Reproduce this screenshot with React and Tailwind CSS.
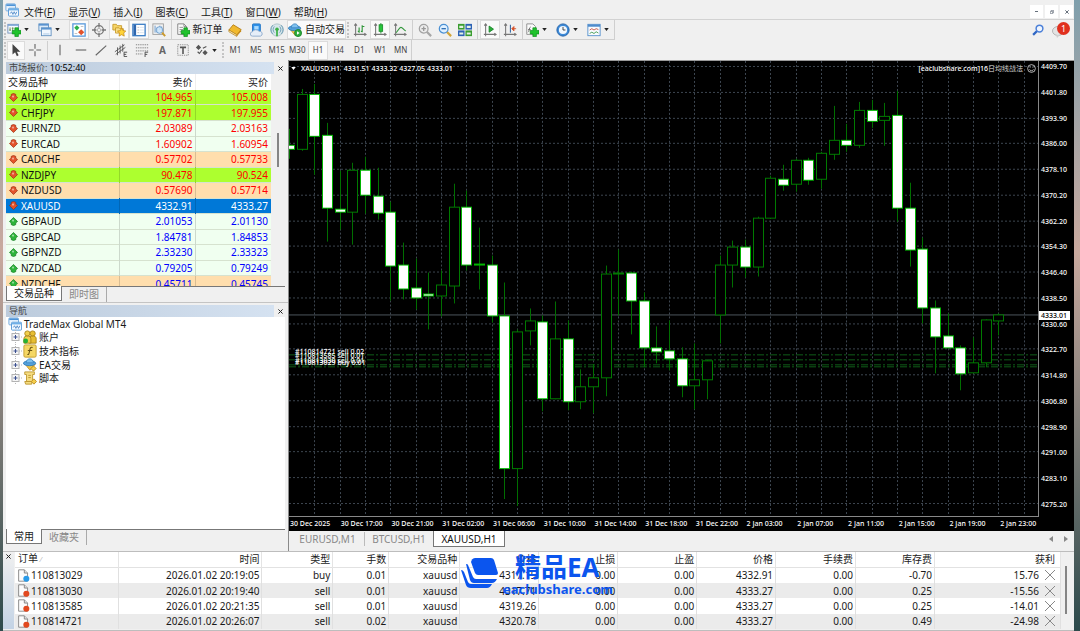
import React from 'react';
import clsx from 'clsx';

const MENUS = [
  ['文件', 'F'],
  ['显示', 'V'],
  ['插入', 'I'],
  ['图表', 'C'],
  ['工具', 'T'],
  ['窗口', 'W'],
  ['帮助', 'H'],
];

const TIMEFRAMES = ['M1', 'M5', 'M15', 'M30', 'H1', 'H4', 'D1', 'W1', 'MN'];

const QUOTES = [
  { symbol: 'AUDJPY', bid: '104.965', ask: '105.008', dir: 'down', row: 'bg-[#adff2f]' },
  { symbol: 'CHFJPY', bid: '197.871', ask: '197.955', dir: 'down', row: 'bg-[#adff2f]' },
  { symbol: 'EURNZD', bid: '2.03089', ask: '2.03163', dir: 'down', row: 'bg-[#f0fff0]' },
  { symbol: 'EURCAD', bid: '1.60902', ask: '1.60954', dir: 'down', row: 'bg-[#f0fff0]' },
  { symbol: 'CADCHF', bid: '0.57702', ask: '0.57733', dir: 'down', row: 'bg-[#ffdead]' },
  { symbol: 'NZDJPY', bid: '90.478', ask: '90.524', dir: 'down', row: 'bg-[#adff2f]' },
  { symbol: 'NZDUSD', bid: '0.57690', ask: '0.57714', dir: 'down', row: 'bg-[#ffdead]' },
  { symbol: 'XAUUSD', bid: '4332.91', ask: '4333.27', dir: 'down', row: 'bg-[#0078d7]', selected: true },
  { symbol: 'GBPAUD', bid: '2.01053', ask: '2.01130', dir: 'up', row: 'bg-[#f0fff0]' },
  { symbol: 'GBPCAD', bid: '1.84781', ask: '1.84853', dir: 'up', row: 'bg-[#f0fff0]' },
  { symbol: 'GBPNZD', bid: '2.33230', ask: '2.33323', dir: 'up', row: 'bg-[#f0fff0]' },
  { symbol: 'NZDCAD', bid: '0.79205', ask: '0.79249', dir: 'up', row: 'bg-[#f0fff0]' },
  { symbol: 'NZDCHF', bid: '0.45711', ask: '0.45745', dir: 'up', row: 'bg-[#ffdead]' },
];

const ORDERS = [
  ['110813029', '2026.01.02 20:19:05', 'buy', '0.01', 'xauusd', '4317.15', '0.00', '0.00', '4332.91', '0.00', '-0.70', '15.76'],
  ['110813030', '2026.01.02 20:19:40', 'sell', '0.01', 'xauusd', '4317.71', '0.00', '0.00', '4333.27', '0.00', '0.25', '-15.56'],
  ['110813585', '2026.01.02 20:21:35', 'sell', '0.01', 'xauusd', '4319.26', '0.00', '0.00', '4333.27', '0.00', '0.25', '-14.01'],
  ['110814721', '2026.01.02 20:26:07', 'sell', '0.02', 'xauusd', '4320.78', '0.00', '0.00', '4333.27', '0.00', '0.49', '-24.98'],
];

const ORDER_COLUMNS = [
  { label: '时间', width: 'w-[143px]' },
  { label: '类型', width: 'w-[71px]' },
  { label: '手数', width: 'w-[56px]' },
  { label: '交易品种', width: 'w-[71px]' },
  { label: '价格', width: 'w-[79px]' },
  { label: '止损', width: 'w-[79px]' },
  { label: '止盈', width: 'w-[79px]' },
  { label: '价格', width: 'w-[79px]' },
  { label: '手续费', width: 'w-[80px]' },
  { label: '库存费', width: 'w-[79px]' },
  { label: '获利', width: 'w-[126px]' },
];

const PRICES = [
  '4409.70', '4401.80', '4393.90', '4386.00', '4378.10', '4370.20', '4362.20', '4354.30', '4346.40',
  '4338.50', '4330.60', '4322.70', '4314.80', '4306.80', '4298.90', '4291.00', '4283.10', '4275.20',
];

const TIMES = [
  '30 Dec 2025', '30 Dec 17:00', '30 Dec 21:00', '31 Dec 02:00', '31 Dec 06:00', '31 Dec 10:00', '31 Dec 14:00',
  '31 Dec 18:00', '31 Dec 22:00', '2 Jan 03:00', '2 Jan 07:00', '2 Jan 11:00', '2 Jan 15:00', '2 Jan 19:00', '2 Jan 23:00',
];

// [high, low, body top, body bottom, 1 = bear (filled) / 0 = bull (hollow)]
const CANDLES = [
  [68, 98, 84, 88, 1], [28, 90, 33, 88, 0], [23, 114, 33, 75, 1], [62, 181, 74, 147, 1],
  [110, 169, 148, 151, 1], [102, 184, 109, 151, 0], [96, 153, 109, 134, 1], [107, 159, 135, 152, 1],
  [141, 240, 151, 205, 1], [182, 239, 204, 228, 1], [198, 249, 227, 237, 1], [212, 269, 233, 235, 1],
  [210, 256, 224, 235, 0], [123, 243, 146, 225, 0], [130, 210, 146, 204, 1], [167, 229, 203, 204, 1],
  [195, 262, 204, 255, 1], [222, 439, 255, 408, 1], [269, 446, 271, 408, 0], [248, 285, 260, 270, 0],
  [255, 351, 261, 338, 1], [241, 339, 278, 338, 0], [260, 350, 278, 341, 1], [309, 349, 326, 341, 0],
  [304, 353, 317, 326, 0], [205, 336, 213, 317, 0], [189, 255, 212, 213, 0], [211, 274, 212, 240, 1],
  [232, 307, 240, 287, 1], [266, 303, 287, 291, 1], [260, 310, 290, 298, 1], [287, 337, 298, 325, 1],
  [283, 349, 319, 325, 0], [300, 339, 300, 319, 0], [195, 283, 204, 254, 0], [180, 227, 186, 204, 0],
  [179, 217, 186, 206, 1], [156, 216, 157, 206, 0], [115, 158, 117, 157, 0], [104, 130, 118, 124, 1],
  [98, 131, 99, 123, 0], [97, 124, 99, 119, 1], [91, 128, 92, 118, 0], [45, 99, 79, 93, 0],
  [63, 91, 79, 84, 1], [41, 87, 49, 84, 0], [39, 67, 49, 60, 1], [42, 85, 55, 59, 0],
  [30, 161, 54, 147, 1], [122, 206, 147, 189, 1], [177, 263, 188, 247, 1], [240, 313, 247, 276, 1],
  [253, 287, 275, 287, 1], [285, 330, 287, 313, 1], [277, 313, 302, 312, 0], [259, 307, 259, 302, 0],
  [253, 275, 254, 260, 0],
];

const POSITIONS = [
  { y: 'top-[286px]', text: '#110814721 sell 0.02' },
  { y: 'top-[290px]', text: '#110813585 sell 0.01' },
  { y: 'top-[295px]', text: '#110813030 sell 0.01' },
  { y: 'top-[297px]', text: '#110813029 buy 0.01' },
];

/* ---------- icons ---------- */

function Icon({ children, className = 'h-[14px] w-[14px]' }) {
  return (
    <svg viewBox="0 0 16 16" fill="none" aria-hidden="true" className={clsx('shrink-0', className)}>
      {children}
    </svg>
  );
}

const Plus = () => (
  <path d="M9 5.500h4v3h3v4h-3v3H9v-3H6v-4h3z" fill="#1fc32c" stroke="#0c8c1a" strokeWidth=".8" />
);

const AppIcon = () => (
  <Icon>
    <rect x="1" y="1" width="11" height="8" rx="1" fill="#eaf4fd" stroke="#6aa5dc" />
    <path d="M1.500 2.500h10" stroke="#4d93d6" strokeWidth="2" />
    <rect x="4" y="6" width="11.500" height="9" rx="1" fill="#f4faff" stroke="#4d93d6" />
    <path d="M4.500 7.500h10.500" stroke="#6fb0e8" strokeWidth="2" />
    <path d="m6 12 1.500-2 1.500 3 1.500-3 1.500 3 1.500-3" stroke="#4b86c6" />
  </Icon>
);

const NewChart = () => (
  <Icon>
    <rect x="1" y="1.500" width="12" height="10" fill="#f4f9ff" stroke="#6a8db8" />
    <path d="M1 2.500h12" stroke="#7aa5d8" strokeWidth="1.500" />
    <path d="M3.500 5v4M2.500 8h2M6.500 5v4M5.500 6h2" stroke="#698c4e" />
    <Plus />
  </Icon>
);

const Profiles = () => (
  <Icon>
    <rect x="1" y="1" width="11" height="8" fill="#dcebf9" stroke="#5f8fbf" />
    <path d="M1 2h11" stroke="#5a93cf" strokeWidth="2" />
    <rect x="4" y="5.500" width="11" height="9" fill="#f0f7fe" stroke="#5f8fbf" />
    <path d="M4 6.500h11" stroke="#5a93cf" strokeWidth="2" />
    <path d="M6 12.500h7" stroke="#a8c5e2" />
  </Icon>
);

const MarketIcon = () => (
  <Icon>
    <rect x="1" y="1" width="14" height="14" fill="#fff" stroke="#5b9bdc" strokeWidth="1.500" />
    <path d="m5.500 2.500 3 3-3 3-3-3z" fill="#2bb04a" />
    <path d="m10.500 7 3.500 3.500-3.500 3.500L7 10.500z" fill="#e2522b" />
    <path d="M10 4h3M3 12h3" stroke="#bbb" />
  </Icon>
);

const DataIcon = () => (
  <Icon>
    <circle cx="8" cy="8" r="5" stroke="#777" strokeWidth="1.500" />
    <circle cx="8" cy="8" r="2" stroke="#aaa" />
    <path d="M8 0v5M8 11v5M0 8h5M11 8h5" stroke="#777" strokeWidth="1.500" />
  </Icon>
);

const FolderStar = () => (
  <Icon>
    <path d="M1 1.500h4l1 1.500h5v5H1z" fill="#f6d568" stroke="#c79a2d" />
    <path d="M4 5.500h4l1 1h4v5H4z" fill="#f9e089" stroke="#c79a2d" />
    <path d="m11 5.500 1.500 3.200 3.300.4-2.400 2.400.6 3.500-3-1.700-3 1.700.6-3.500L6.200 9.100l3.300-.4z" fill="#ffd43a" stroke="#c2861a" strokeWidth=".8" />
  </Icon>
);

const TerminalIcon = () => (
  <Icon>
    <rect x="1" y="1.500" width="14" height="13" fill="#fff" stroke="#3e7fc6" strokeWidth="1.500" />
    <path d="M3.200 2v12" stroke="#2d66ae" strokeWidth="3" />
    <path d="M6.500 5h1M6.500 8h1M6.500 11h1" stroke="#888" />
    <path d="M8.500 5h5M8.500 8h5M8.500 11h5" stroke="#d7e2ef" />
  </Icon>
);

const TesterIcon = () => (
  <Icon>
    <rect x="1" y="1" width="12" height="12" fill="#f3f3f3" stroke="#9a9a9a" />
    <path d="M3.500 3v8M6 5v6M9 3v5M11 4v5" stroke="#5b92ca" />
    <circle cx="8.500" cy="8" r="3.800" fill="#cbe5fa" fillOpacity=".85" stroke="#6b9ccc" />
    <path d="m11.500 11 3.500 4" stroke="#cc9a2c" strokeWidth="2.200" />
  </Icon>
);

const NewOrderIcon = () => (
  <Icon>
    <path d="M2 1h7l3 3v9H2z" fill="#fafafa" stroke="#7d7d7d" />
    <path d="M9 1v3h3M4 5h4M4 7.500h4M4 10h3" stroke="#8b8b8b" />
    <Plus />
  </Icon>
);

const GoldBook = () => (
  <Icon>
    <path d="M6 2l9 5.500-5 6L1 8z" fill="#f0b92e" stroke="#b27c14" />
    <path d="m1 8 9 5.500v1.800L1 10z" fill="#fff0bd" stroke="#b27c14" strokeWidth=".8" />
    <path d="m10 13.500 5-6v2l-5 5.800z" fill="#c88c19" />
  </Icon>
);

const CloudUser = () => (
  <Icon>
    <rect x="4" y="1" width="9" height="9" rx="1" fill="#2f92ea" stroke="#1f73c4" />
    <path d="M6 3.500h5v4H6z" fill="#a9dbff" />
    <path d="M4 15a2.500 2.500 0 0 1 0-5 4 3 0 0 1 7.500-.5A2.800 2.800 0 0 1 13 15z" fill="#e6eef8" stroke="#8ba8ca" />
  </Icon>
);

const SignalIcon = () => (
  <Icon>
    <circle cx="8" cy="8" r="7" fill="#d7e6ea" stroke="#a8c0c6" />
    <path d="M5 4a5 5 0 0 0 0 7M11 4a5 5 0 0 1 0 7M3 2.500a8 8 0 0 0 0 10M13 2.500a8 8 0 0 1 0 10" stroke="#6598b4" />
    <circle cx="8" cy="7" r="2" fill="#3eb047" />
    <path d="M8 8v7" stroke="#3eb047" strokeWidth="2" />
  </Icon>
);

const HatIcon = ({ play }) => (
  <Icon>
    <path d="M2 6.500 8 14l6-7z" fill="#f1c546" stroke="#c4912a" />
    <ellipse cx="7.500" cy="6" rx="7" ry="2.800" fill="#57a3dd" stroke="#2f7ab8" />
    <path d="M3.500 5.500C4 2 6 1 8 1s3.500 1.500 4 4.500z" fill="#7fc1ef" stroke="#3a86c2" />
    {play ? (
      <>
        <circle cx="11.500" cy="11.500" r="4" fill="#2fae3e" stroke="#178527" />
        <path d="m10.300 9.500 3 2-3 2z" fill="#fff" />
      </>
    ) : (
      <path d="m12 9 3 3-3 3-3-3z" fill="#f4cd4a" stroke="#b98a1e" />
    )}
  </Icon>
);

const Axis = () => (
  <path d="M3 1v14M1 13h14M1.500 3 3 1l1.500 2M13 11.500 15 13l-2 1.500" stroke="#777" strokeWidth="1.200" />
);

const BarsIcon = () => (
  <Icon>
    <Axis />
    <path d="M7 5v6M5.500 9.500H7M10.500 2.500v8M10.500 4H13M9 9.500h1.500" stroke="#30963a" strokeWidth="1.300" />
  </Icon>
);

const CandleIcon = () => (
  <Icon>
    <Axis />
    <path d="M9 0v12" stroke="#1b8f2b" />
    <rect x="7" y="2" width="4" height="7.500" fill="#28c53c" stroke="#1b8f2b" />
  </Icon>
);

const LineIcon = () => (
  <Icon>
    <Axis />
    <path d="M3.500 11C6 9 7 5 9 5s3 3 5.500 4" stroke="#30963a" strokeWidth="1.300" />
  </Icon>
);

const ZoomIcon = ({ plus }) => (
  <Icon>
    <path d="m10 10 5 5" stroke={plus ? '#a7a7a7' : '#d3a538'} strokeWidth="2.500" />
    <circle cx="6.500" cy="6.500" r="5" fill={plus ? '#ececec' : '#dff0ff'} stroke={plus ? '#a2a2a2' : '#4a90d4'} strokeWidth="1.400" />
    <path d={plus ? 'M4 6.500h5M6.500 4v5' : 'M4 6.500h5'} stroke={plus ? '#999' : '#2d6db2'} strokeWidth="1.500" />
  </Icon>
);

const TileIcon = () => (
  <Icon>
    <rect x="0" y="1" width="7.500" height="6.500" fill="#3a9d30" />
    <rect x="8.500" y="1" width="7.500" height="6.500" fill="#2d62b5" />
    <rect x="0" y="8.500" width="7.500" height="6.500" fill="#2d62b5" />
    <rect x="8.500" y="8.500" width="7.500" height="6.500" fill="#3a9d30" />
    <path d="M1.500 4.500h4.500M10 4.500h4.500M1.500 12h4.500M10 12h4.500" stroke="#e5f2e5" strokeWidth="2.500" />
  </Icon>
);

const ScrollIcon = () => (
  <Icon>
    <Axis />
    <path d="m7 3.500 5 3.500-5 3.500z" fill="#2caf3c" stroke="#188428" />
  </Icon>
);

const ShiftIcon = () => (
  <Icon>
    <Axis />
    <path d="M8.500 2v9" stroke="#3f6fa6" strokeWidth="1.300" />
    <path d="M15 6.500h-4M12.500 4 10 6.500 12.500 9z" fill="#d5522c" stroke="#d5522c" />
  </Icon>
);

const IndicatorAdd = () => (
  <Icon>
    <path d="M2 1h7l3 3v9H2z" fill="#fafafa" stroke="#8a8a8a" />
    <path d="M3.500 10.500c1.500 0 1-6 3-6M3.500 7.500h3" stroke="#666" />
    <Plus />
  </Icon>
);

const ClockIcon = () => (
  <Icon>
    <circle cx="8" cy="8" r="7" fill="#3c8ad8" stroke="#1d5da5" />
    <circle cx="8" cy="8" r="4.700" fill="#f2f8fe" />
    <path d="M8 4.500V8h2.800" stroke="#333" />
  </Icon>
);

const TemplateIcon = () => (
  <Icon>
    <rect x="1" y="1.500" width="14" height="13" fill="#f8fbff" stroke="#4f8ccc" />
    <path d="M1 3h14" stroke="#4f8ccc" strokeWidth="2.500" />
    <path d="m3 8 2.500-1.500L8 8l2.500-1.500L13 7.500" stroke="#c44d3a" />
    <path d="m3 12 2.500-1.500L8 12l2.500-2 2.500 1.500" stroke="#3c9648" />
  </Icon>
);

const CursorIcon = () => (
  <Icon>
    <path d="M4 1v12l3-2.500L9 15l2-1-2-4h4z" fill="#444" />
  </Icon>
);

const CrossIcon = () => (
  <Icon>
    <path d="M8 1v5.500M8 9.500V15M1 8h5.500M9.500 8H15" stroke="#666" strokeWidth="1.300" />
  </Icon>
);

const VLine = () => <Icon><path d="M8 2v12" stroke="#666" strokeWidth="1.300" /></Icon>;
const HLine = () => <Icon><path d="M2 8h12" stroke="#666" strokeWidth="1.300" /></Icon>;
const TrendLine = () => <Icon><path d="M2 14 14 3" stroke="#666" strokeWidth="1.300" /></Icon>;

const ChannelIcon = () => (
  <Icon>
    <path d="M1 10 12 2M2 13 13 5M4 5v9M7 3v9M10 1v9" stroke="#555" />
    <path d="M15 10.500h-3.500v5H15M11.500 13H14" stroke="#444" />
  </Icon>
);

const FiboIcon = () => (
  <Icon>
    <path d="M1 2h14M1 5.500h14M1 9h14M1 12.500h8" stroke="#777" strokeDasharray="1.500 1" />
    <path d="M15 10.500h-3.500V16M11.500 13H14" stroke="#444" />
  </Icon>
);

const LabelIcon = () => (
  <Icon>
    <rect x="2" y="2" width="12" height="12" stroke="#888" strokeDasharray="1.500 1" />
    <path d="M4.500 5h7M8 5v7.500" stroke="#555" strokeWidth="1.800" />
  </Icon>
);

const ArrowsIcon = () => (
  <Icon>
    <path d="m4 2 3 3-3 3-3-3zM11.500 8l3 3-3 3-3-3z" fill="#555" />
    <path d="m3 10 2 2 3-4M9 6l4-2" stroke="#555" strokeWidth="1.300" />
  </Icon>
);

function QuoteArrow({ dir }) {
  const up = dir === 'up';
  return (
    <svg viewBox="0 0 10 10" className="h-[9px] w-[9px] shrink-0" aria-hidden="true">
      <path
        d={up ? 'M5 .5 9.500 5 7.500 6.500v2L5 9.500 2.500 8.500v-2L.5 5z' : 'M5 9.500 .5 5 2.500 3.500v-2L5 .5l2.500 1v2l2 1.500z'}
        fill={up ? '#2cb53a' : '#e4532a'}
        stroke={up ? '#157a22' : '#9c2e12'}
        strokeWidth=".8"
      />
      <circle cx="4.500" cy="4" r="1.200" fill="#fff" fillOpacity=".5" />
    </svg>
  );
}

const AccountsIcon = () => (
  <Icon>
    <circle cx="5" cy="4" r="3" fill="#f1cf4c" stroke="#a98114" />
    <circle cx="11" cy="4" r="3" fill="#e7be33" stroke="#a98114" />
    <path d="M7 15V9a3 3 0 0 1 3-2h2a3 3 0 0 1 3 2v6z" fill="#e7be33" stroke="#a98114" />
    <path d="M1 15v-5a3 3 0 0 1 3-3h2a3 3 0 0 1 3 3v5z" fill="#f1cf4c" stroke="#a98114" />
    <circle cx="3" cy="12.500" r="2.800" fill="#27b034" />
  </Icon>
);

const FunctionIcon = () => (
  <Icon>
    <rect x="1" y="1" width="14" height="14" rx="1.500" fill="#f5d765" stroke="#c29a2b" />
    <path d="M11 4c-3-1-3 2-3.500 4S7 12.500 5 12M5.500 7.500h5" stroke="#6b5310" strokeWidth="1.200" />
  </Icon>
);

const ScriptIcon = () => (
  <Icon>
    <path d="M2 1h11v3h-2v8H4V4H2z" fill="#f5dc80" stroke="#bc952d" />
    <path d="M6 5h3M6 7.500h3" stroke="#bc952d" />
    <path d="M2 12h8v3H3z" fill="#f5dc80" stroke="#bc952d" />
    <path d="m12.500 9 3 3-3 3-3-3z" fill="#f4cd4a" stroke="#b98a1e" />
  </Icon>
);

const OrderIcon = ({ type }) => (
  <Icon className="h-[13px] w-[13px]">
    <path d="M2 1h7l4 4v10H2z" fill="#fcfcfc" stroke="#777" />
    <path d="M9 1v4h4" fill="#ddd" stroke="#777" />
    <circle cx="11.500" cy="12" r="3.700" fill={type === 'buy' ? '#2a9be8' : '#e2491f'} />
  </Icon>
);

/* ---------- toolbar pieces ---------- */

function ToolButton({ label, active, className = 'w-5 justify-center', children }) {
  return (
    <button
      type="button"
      aria-label={label}
      title={label}
      className={clsx(
        'flex h-[19px] shrink-0 items-center gap-[3px]',
        active && 'border border-[#dcdcdc] bg-[#fafafa]',
        className
      )}
    >
      {children}
    </button>
  );
}

function Caret() {
  return (
    <svg viewBox="0 0 6 4" className="h-[3px] w-[5px] shrink-0" aria-hidden="true">
      <path d="M0 0h6L3 4z" fill="#222" />
    </svg>
  );
}

function DropButton({ label, className = 'w-[31px]', children }) {
  return (
    <ToolButton label={label} className={className}>
      {children}
      <Caret />
    </ToolButton>
  );
}

const Sep = () => <span className="mx-[2px] h-[19px] w-px shrink-0 bg-[#cfcfcf]" />;
const Grip = () => <span className="mx-px h-4 w-[2px] shrink-0 border-l-2 border-dotted border-[#c4c4c4]" />;

function MenuBar() {
  return (
    <header className="flex h-5 items-center border-b border-[#d2d2d2] pl-[2px]">
      <AppIcon />
      <nav className="ml-[5px] flex flex-1 gap-[13px]">
        {MENUS.map(([name, key]) => (
          <button key={key} type="button" className="pt-1 leading-4">
            {name}(<u className="underline-offset-1">{key}</u>)
          </button>
        ))}
      </nav>
      <div className="flex gap-[2px] pt-1 pr-px text-[#66707c]">
        <button type="button" aria-label="最小化" className="flex h-[13px] w-[13px] items-center justify-center bg-white">
          <span className="h-px w-[3px] bg-current" />
        </button>
        <button type="button" aria-label="还原" className="flex h-[13px] w-[13px] items-center justify-center bg-white">
          <svg viewBox="0 0 6 6" className="h-1 w-1"><path d="M2 2V.5h3.500V4H4M.5 2H4v3.500H.5z" fill="none" stroke="currentColor" /></svg>
        </button>
        <button type="button" aria-label="关闭" className="flex h-[13px] w-[13px] items-center justify-center bg-white">
          <svg viewBox="0 0 6 6" className="h-1 w-1"><path d="m.5.5 5 5m0-5-5 5" stroke="currentColor" strokeWidth="1.500" /></svg>
        </button>
      </div>
    </header>
  );
}

function Toolbars() {
  return (
    <div className="flex">
      <div className="flex-1">
        <div className="flex">
          <div className="flex h-5 items-center border-r border-b border-[#cfcfcf]">
            <Grip />
            <DropButton label="新图表"><NewChart /></DropButton>
            <DropButton label="配置文件"><Profiles /></DropButton>
            <ToolButton label="市场报价" active><MarketIcon /></ToolButton>
            <ToolButton label="数据窗口"><DataIcon /></ToolButton>
            <ToolButton label="导航" active><FolderStar /></ToolButton>
            <ToolButton label="终端" active><TerminalIcon /></ToolButton>
            <ToolButton label="策略测试"><TesterIcon /></ToolButton>
            <Sep />
            <ToolButton label="新订单" className="w-[50px] justify-center">
              <NewOrderIcon />
              新订单
            </ToolButton>
            <ToolButton label="MetaEditor" className="w-[21px] justify-center"><GoldBook /></ToolButton>
            <ToolButton label="社区" className="w-[21px] justify-center"><CloudUser /></ToolButton>
            <ToolButton label="信号" className="w-[21px] justify-center"><SignalIcon /></ToolButton>
            <ToolButton label="自动交易" active className="w-[59px] justify-center">
              <HatIcon play />
              自动交易
            </ToolButton>
            <Grip />
            <ToolButton label="柱状图"><BarsIcon /></ToolButton>
            <ToolButton label="蜡烛图" active><CandleIcon /></ToolButton>
            <ToolButton label="折线图"><LineIcon /></ToolButton>
            <Sep />
            <ToolButton label="放大"><ZoomIcon plus /></ToolButton>
            <ToolButton label="缩小"><ZoomIcon /></ToolButton>
            <ToolButton label="平铺窗口"><TileIcon /></ToolButton>
            <Sep />
            <ToolButton label="自动滚动" active><ScrollIcon /></ToolButton>
            <ToolButton label="图表平移"><ShiftIcon /></ToolButton>
            <Sep />
            <DropButton label="指标列表"><IndicatorAdd /></DropButton>
            <DropButton label="时间周期"><ClockIcon /></DropButton>
            <DropButton label="模板" className="w-[27px]"><TemplateIcon /></DropButton>
          </div>
        </div>
        <div className="flex">
          <div className="flex h-5 items-center border-r border-[#cfcfcf]">
            <Grip />
            <ToolButton label="光标" active className="w-[18px] justify-center"><CursorIcon /></ToolButton>
            <ToolButton label="十字线"><CrossIcon /></ToolButton>
            <Sep />
            <ToolButton label="垂直线"><VLine /></ToolButton>
            <ToolButton label="水平线" className="w-[21px] justify-center"><HLine /></ToolButton>
            <ToolButton label="趋势线"><TrendLine /></ToolButton>
            <ToolButton label="等距通道"><ChannelIcon /></ToolButton>
            <ToolButton label="斐波那契回调" className="w-[21px] justify-center"><FiboIcon /></ToolButton>
            <ToolButton label="文字" className="w-[21px] justify-center">
              <span className="font-bold text-[#666]">A</span>
            </ToolButton>
            <ToolButton label="文字标签"><LabelIcon /></ToolButton>
            <DropButton label="箭头" className="w-[28px] pl-[2px]"><ArrowsIcon /></DropButton>
            <Grip />
            <div className="grid w-[186px] grid-cols-9 text-[8px] text-[#444]">
              {TIMEFRAMES.map((tf) => (
                <ToolButton key={tf} label={tf} active={tf === 'H1'} className="justify-center">
                  {tf}
                </ToolButton>
              ))}
            </div>
          </div>
        </div>
      </div>

      <div className="flex h-5 items-center gap-2 pr-1">
        <button type="button" aria-label="搜索">
          <Icon className="h-3 w-3">
            <path d="M8 8 1.500 14.500" stroke="#2f66c4" strokeWidth="3" />
            <circle cx="10" cy="6" r="4.500" fill="#eef5ff" stroke="#4c80d8" strokeWidth="2" />
          </Icon>
        </button>
        <button type="button" aria-label="消息" className="relative h-5 w-[18px]">
          <svg viewBox="0 0 18 20" className="h-5 w-[18px]" aria-hidden="true">
            <ellipse cx="6" cy="11" rx="5.500" ry="4.500" fill="#e3e3e3" stroke="#b4b4b4" />
            <path d="m4 15 1 3 3-3z" fill="#cfcfcf" />
          </svg>
          <span className="absolute top-[2px] right-0 flex h-[13px] w-[13px] items-center justify-center rounded-full bg-[#e0301e] text-[9px] leading-none text-white">
            1
          </span>
        </button>
      </div>
    </div>
  );
}

/* ---------- left dock ---------- */

function PanelTitle({ children }) {
  return (
    <div className="mr-px ml-[3px] flex h-3 items-center">
      <h2 className="h-3 flex-1 bg-linear-to-r from-[#bccbdc] to-[#d5e2f1] pl-[3px] text-[9px] leading-3 text-[#444]">{children}</h2>
      <button type="button" aria-label="关闭" className="flex w-[13px] justify-center">
        <svg viewBox="0 0 6 6" className="h-[5px] w-[5px]"><path d="m.5.5 5 5m0-5-5 5" stroke="#222" strokeWidth="1.200" /></svg>
      </button>
    </div>
  );
}

function DockTabs({ tabs }) {
  return (
    <div className="mr-[3px] ml-[3px] flex h-4 items-start border-t border-[#777]">
      {tabs.map((tab, i) => (
        <button
          key={tab}
          type="button"
          className={clsx(
            'h-[15px] leading-[13px]',
            i === 0 ? '-mt-px border border-t-0 border-[#777] bg-white px-[7px]' : 'border-r border-[#aaa] px-[7px] text-[#888]'
          )}
        >
          {tab}
        </button>
      ))}
    </div>
  );
}

function MarketWatch() {
  return (
    <section className="pt-[2px]">
      <PanelTitle>
        市场报价: <span className="text-black">10:52:40</span>
      </PanelTitle>
      <div className="mr-[3px] ml-[3px] flex h-[212px] items-start overflow-hidden">
        <table className="h-[218px] flex-1 table-fixed border-collapse bg-white">
          <thead>
            <tr className="h-4">
              <th className="w-[43%] border-r border-[#eee] pl-[2px] text-left leading-3 font-normal">交易品种</th>
              <th className="border-r border-[#eee] pr-[3px] text-right leading-3 font-normal">卖价</th>
              <th className="pr-[3px] text-right leading-3 font-normal">买价</th>
            </tr>
          </thead>
          <tbody>
            {QUOTES.map((q) => (
              <tr
                key={q.symbol}
                className={clsx(
                  'border-b border-[#d6e2cf]',
                  q.row,
                  q.selected ? 'text-white' : q.dir === 'up' ? 'text-[#0000ff]' : 'text-[#ff0000]'
                )}
              >
                <td className="border-r border-black/15 p-0">
                  <span className={clsx('flex items-center gap-[3px] pl-[3px] leading-3', !q.selected && 'text-[#111]')}>
                    <QuoteArrow dir={q.dir} />
                    {q.symbol}
                  </span>
                </td>
                <td className="border-r border-black/15 p-0 pr-[3px] text-right leading-3">{q.bid}</td>
                <td className="p-0 pr-[3px] text-right leading-3">{q.ask}</td>
              </tr>
            ))}
          </tbody>
        </table>
        <div className="flex w-[14px] justify-center pt-[59px]">
          <span className="h-[34px] w-[2px] bg-[#858585]" />
        </div>
      </div>
      <DockTabs tabs={['交易品种', '即时图']} />
    </section>
  );
}

const TREE = [
  { label: '账户', icon: <AccountsIcon /> },
  { label: '技术指标', icon: <FunctionIcon /> },
  { label: 'EA交易', icon: <HatIcon /> },
  { label: '脚本', icon: <ScriptIcon /> },
];

function Navigator() {
  return (
    <section className="flex flex-1 flex-col border-t border-[#c4c4c4] pt-[2px]">
      <PanelTitle>导航</PanelTitle>
      <div className="mx-[3px] flex-1 bg-white">
        <ul className="grid h-[68px] grid-rows-5">
          <li className="flex items-center gap-[2px] pl-[2px] leading-3">
            <AppIcon />
            TradeMax Global MT4
          </li>
          {TREE.map((node) => (
            <li key={node.label} className="flex items-center pl-[5px] leading-3">
              <button type="button" aria-label={`展开 ${node.label}`} className="flex">
                <svg viewBox="0 0 12 14" className="h-[14px] w-3" fill="none">
                  <path d="M4.500 0v14M8 7h4" stroke="#b5b5b5" strokeDasharray="1 1" />
                  <rect x="1" y="3.500" width="7" height="7" fill="#f6f6f6" stroke="#b3b3b3" />
                  <path d="M2.500 7h4M4.500 5v4" stroke="#3a4f8f" />
                </svg>
              </button>
              {node.icon}
              <span className="ml-[2px]">{node.label}</span>
            </li>
          ))}
        </ul>
      </div>
      <DockTabs tabs={['常用', '收藏夹']} />
    </section>
  );
}

/* ---------- chart ---------- */

function CandleChart() {
  const step = 38 / 3;
  return (
    <svg viewBox="0 0 749 456" preserveAspectRatio="none" shapeRendering="crispEdges" className="absolute inset-0 h-full w-full" aria-label="XAUUSD H1">
      <g stroke="#3d4650" strokeDasharray="2 2">
        {PRICES.map((p, i) => {
          const y = Math.round(5 + i * 25.76) + 0.5;
          return <path key={p} d={`M0 ${y}H749`} />;
        })}
        {Array.from({ length: 29 }, (_, i) => {
          const x = Math.round((i + 1) * step * 2) + 0.5;
          return <path key={i} d={`M${x} 0V456`} />;
        })}
      </g>
      <path d="M0 254.500H749" stroke="#4b545c" />
      <g stroke="#0f5c18" strokeDasharray="7 2 2 2">
        <path d="M0 294.500H749M0 299.500H749M0 304.500H749M0 306.500H749" />
      </g>
      {CANDLES.map(([high, low, top, bottom, bear], i) => {
        const x = Math.round(i * step) + 0.5;
        return (
          <g key={i} stroke={bear ? '#00b400' : '#007a00'}>
            <path d={`M${x} ${high}V${low}`} stroke="#006e00" />
            <rect x={x - 5} y={top + 0.5} width="10" height={Math.max(bottom - top, 1)} fill={bear ? '#fff' : '#000'} />
          </g>
        );
      })}
    </svg>
  );
}

function ChartWindow() {
  return (
    <main className="flex min-w-0 flex-1 flex-col">
      <div className="flex flex-1 flex-col border-t border-[#999] bg-black text-[7px] font-medium text-white">
        <div className="flex flex-1">
          <div className="relative flex-1 border-b border-[#888]">
            <CandleChart />
            <div className="relative flex h-3 items-center pt-[3px] pr-[2px] pl-[2px] leading-[10px]">
              <svg viewBox="0 0 6 4" className="mr-[5px] h-[3px] w-[5px]"><path d="M0 0h6L3 4z" fill="#fff" /></svg>
              <span>XAUUSD,H1&nbsp; 4331.51 4333.32 4327.05 4333.01</span>
              <span className="ml-auto">[eaclubshare.com]16<span className="text-[#aaa]">日均线战法</span></span>
              <svg viewBox="0 0 10 10" className="ml-1 h-[9px] w-[9px]" fill="none" stroke="#ddd" strokeWidth=".9">
                <circle cx="5" cy="5" r="4.300" />
                <path d="M3.500 3v1M6.500 3v1M2.800 6c1 2 3.400 2 4.400 0" />
              </svg>
            </div>
            {POSITIONS.map((p) => (
              <span key={p.text} className={clsx('absolute left-[6px] leading-[10px]', p.y)}>{p.text}</span>
            ))}
          </div>
          <div className="relative flex w-9 flex-col justify-between border-l border-[#888] pt-px pb-[7px] pl-[2px] leading-[10px]">
            {PRICES.map((p) => (
              <span key={p}>{p}</span>
            ))}
            <span className="absolute top-[250px] left-0 w-[31px] bg-white pl-[2px] leading-[9px] text-black">4333.01</span>
          </div>
        </div>
        <div className="mr-6 grid h-[14px] grid-cols-15 leading-[13px] whitespace-nowrap">
          {TIMES.map((t) => (
            <span key={t} className="pl-px">{t}</span>
          ))}
        </div>
      </div>
      <div className="mb-1 flex h-4 items-start text-[#888]">
        <button type="button" className="mt-px w-[76px] border-r border-[#bbb] pl-[2px] leading-[14px]">EURUSD,M1</button>
        <button type="button" className="mt-px w-[68px] leading-[14px]">BTCUSD,H1</button>
        <button type="button" className="h-4 w-[72px] border border-t-0 border-[#777] bg-white leading-[14px] text-[#111]">XAUUSD,H1</button>
        <div className="mt-[5px] mr-[6px] ml-auto flex gap-[11px]">
          <button type="button" aria-label="向左">
            <svg viewBox="0 0 4 6" className="h-[6px] w-1"><path d="M4 0v6L0 3z" fill="#888" /></svg>
          </button>
          <button type="button" aria-label="向右">
            <svg viewBox="0 0 4 6" className="h-[6px] w-1"><path d="M0 0v6l4-3z" fill="#888" /></svg>
          </button>
        </div>
      </div>
    </main>
  );
}

/* ---------- terminal ---------- */

function Watermark() {
  return (
    <div className="pointer-events-none absolute top-0 left-[458px] flex text-[#0b55ee]">
      <svg viewBox="0 0 38 34" className="mt-[5px] h-[34px] w-[38px]" fill="currentColor" aria-hidden="true">
        <path d="M11 2.500Q12 1 14 1h16q2 0 3 2l4 13q0 2-2 2H17q-2 0-3-2L10 5z" />
        <path d="M5 7q2 0 2 1l5 12q1 2 3 2h21q-2 4-5 4H13q-3 0-4-3z" />
        <path d="M0 13q2 0 3 2l4 10q1 2 3 2h21q-2 4-5 4H10q-4 0-5-3z" />
      </svg>
      <div className="ml-1 font-bold">
        <p className="ml-3 text-[26px] leading-[30px]">精品EA</p>
        <p className="text-[13px] leading-[14px]">eaclubshare.com</p>
      </div>
    </div>
  );
}

function Terminal() {
  return (
    <section className="relative flex border-y border-[#bdbdbd] pb-px">
      <div className="mr-px flex w-[11px] flex-col bg-linear-to-b from-[#f0f0f0] to-[#c3d3e5]">
        <button type="button" aria-label="关闭" className="flex h-2 items-center justify-center">
          <svg viewBox="0 0 6 6" className="h-[5px] w-[5px]"><path d="m.5.5 5 5m0-5-5 5" stroke="#222" strokeWidth="1.200" /></svg>
        </button>
      </div>
      <table className="h-[77px] flex-1 table-fixed border-collapse bg-white">
        <thead>
          <tr className="h-[15px] border-b border-[#e2e2e2]">
            <th className="w-[104px] border-r border-[#e4e4e4] p-0 pl-[3px] text-left leading-3 font-normal">
              订单 <span className="text-[7px] text-[#aaa]">⁄</span>
            </th>
            {ORDER_COLUMNS.map((col, i) => (
              <th key={i} className={clsx('border-r border-[#e4e4e4] p-0 pr-[2px] text-right leading-3 font-normal', col.width, i === 10 && 'pr-[5px]')}>
                {col.label}
              </th>
            ))}
          </tr>
        </thead>
        <tbody>
          {ORDERS.map((row) => (
            <tr key={row[0]} className="odd:bg-white even:bg-[#ebebeb]">
              {row.map((cell, i) => (
                <td key={i} className="border-r border-[#e0e0e0] p-0 pr-[2px] text-right leading-3">
                  {i === 0 ? (
                    <span className="flex items-center gap-px pl-[2px]">
                      <OrderIcon type={row[2]} />
                      {cell}
                    </span>
                  ) : i === 11 ? (
                    <span className="flex items-center justify-end gap-[6px] pr-[3px]">
                      {cell}
                      <button type="button" aria-label={`平仓 ${row[0]}`}>
                        <svg viewBox="0 0 10 10" className="h-[10px] w-[10px]"><path d="m0 0 10 10M10 0 0 10" stroke="#888" /></svg>
                      </button>
                    </span>
                  ) : (
                    cell
                  )}
                </td>
              ))}
            </tr>
          ))}
        </tbody>
      </table>
      <div className="flex w-[13px] pt-[14px] pl-[4px]">
        <span className="h-12 w-[2px] bg-[#858585]" />
      </div>
      <Watermark />
    </section>
  );
}

export default function App() {
  return (
    <div className="flex min-h-screen bg-linear-to-b from-[#7f9fac] via-[#c9a99e] via-40% to-[#2c4a4c] pr-[6px] pl-[3px] font-['Noto_Sans','Noto_Sans_CJK_SC',sans-serif] text-[10px] text-[#1a1a1a]">
      <div className="flex min-w-0 flex-1 flex-col bg-[#f0f0f0]">
        <MenuBar />
        <Toolbars />
        <div className="flex flex-1">
          <aside className="flex w-[286px] shrink-0 flex-col border-r border-[#8a8a8a] pb-[6px]">
            <MarketWatch />
            <Navigator />
          </aside>
          <ChartWindow />
        </div>
        <Terminal />
      </div>
    </div>
  );
}
